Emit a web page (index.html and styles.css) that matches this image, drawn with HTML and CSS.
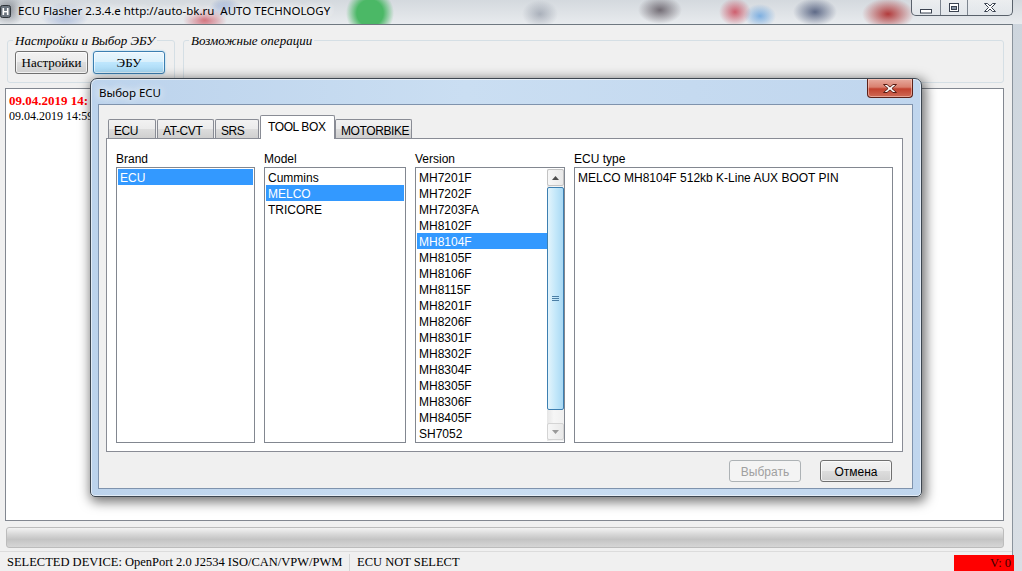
FILE: index.html
```html
<!DOCTYPE html>
<html lang="ru">
<head>
    <meta charset="UTF-8">
    <title>ECU Flasher 2.3.4.e</title>
    <link rel="stylesheet" href="styles.css">
</head>
<body>

<div class="window">
    <!-- заголовок главного окна -->
    <div class="titlebar">
        <svg class="app-icon" width="11" height="15" viewBox="0 0 11 15">
            <rect x="0.5" y="1.5" width="10" height="12" rx="2" fill="#6d7680" stroke="#2e343a"/>
            <rect x="2.5" y="4" width="1.6" height="7" fill="#fff"/>
            <rect x="6.9" y="4" width="1.6" height="7" fill="#fff"/>
            <rect x="3.5" y="7" width="4" height="1.4" fill="#fff"/>
        </svg>
        <span class="title">ECU Flasher 2.3.4.e http://auto-bk.ru  AUTO TECHNOLOGY</span>
        <div class="win-controls">
            <span class="wc wc-min">
                <svg width="14" height="6" viewBox="0 0 14 6"><rect x="1.5" y="1.5" width="11" height="3.5" fill="#fff" stroke="#3b4350"/></svg>
            </span>
            <span class="wc wc-max">
                <svg width="12" height="11" viewBox="0 0 12 11"><rect x="1.5" y="1.5" width="9" height="8" fill="#fff" stroke="#3b4350"/><rect x="3.5" y="4.5" width="5" height="3" fill="#8a96a6" stroke="#3b4350"/></svg>
            </span>
            <span class="wc wc-close">
                <svg width="14" height="11" viewBox="0 0 14 11"><path d="M1.5 1.5h3l2.5 2.5 2.5-2.5h3l-4 4 4 4h-3l-2.5-2.5-2.5 2.5h-3l4-4z" fill="#fff" stroke="#3b4350"/></svg>
            </span>
        </div>
    </div>

    <div class="client">
        <div class="top-row">
            <fieldset class="group group-settings">
                <legend>Настройки и Выбор ЭБУ</legend>
                <button class="btn btn-main">Настройки</button>
                <button class="btn btn-main btn-focus">ЭБУ</button>
            </fieldset>
            <fieldset class="group group-ops">
                <legend>Возможные операции</legend>
            </fieldset>
        </div>

        <!-- журнал (остальное закрыто диалогом) -->
        <div class="log">
            <p class="log-red">09.04.2019 14:</p>
            <p>09.04.2019 14:59</p>
        </div>

        <div class="progress"></div>

        <div class="statusbar">
            <span class="sb-panel sb-device">SELECTED DEVICE: OpenPort 2.0 J2534 ISO/CAN/VPW/PWM</span>
            <span class="sb-panel sb-ecu">ECU NOT SELECT</span>
            <span class="sb-version">V: 0</span>
        </div>
    </div>
</div>

<!-- окно выбора ЭБУ -->
<div class="dialog">
    <div class="dlg-titlebar">
        <span class="dlg-title">Выбор ECU</span>
        <span class="dlg-close">
            <svg width="16" height="11" viewBox="0 0 16 11"><path d="M1.5 1.5h3.5l3 2.6 3-2.6h3.5l-4.6 4 4.6 4h-3.5l-3-2.6-3 2.6h-3.5l4.6-4z" fill="#fff" stroke="#5a1d14"/></svg>
        </span>
    </div>

    <div class="dlg-body">
        <div class="tabs">
            <span class="tab tab-ecu">ECU</span>
            <span class="tab tab-at">AT-CVT</span>
            <span class="tab tab-srs">SRS</span>
            <span class="tab tab-tool active">TOOL BOX</span>
            <span class="tab tab-moto">MOTORBIKE</span>
        </div>

        <div class="tab-panel">
            <div class="pick-grid">
                <div class="col-label">Brand</div>
                <div class="col-label">Model</div>
                <div class="col-label">Version</div>
                <div class="col-label">ECU type</div>

                <div class="listbox">
                    <div class="item selected">ECU</div>
                </div>

                <div class="listbox">
                    <div class="item">Cummins</div>
                    <div class="item selected">MELCO</div>
                    <div class="item">TRICORE</div>
                </div>

                <div class="listbox listbox-scroll">
                    <div class="items">
                        <div class="item">MH7201F</div>
                        <div class="item">MH7202F</div>
                        <div class="item">MH7203FA</div>
                        <div class="item">MH8102F</div>
                        <div class="item selected">MH8104F</div>
                        <div class="item">MH8105F</div>
                        <div class="item">MH8106F</div>
                        <div class="item">MH8115F</div>
                        <div class="item">MH8201F</div>
                        <div class="item">MH8206F</div>
                        <div class="item">MH8301F</div>
                        <div class="item">MH8302F</div>
                        <div class="item">MH8304F</div>
                        <div class="item">MH8305F</div>
                        <div class="item">MH8306F</div>
                        <div class="item">MH8405F</div>
                        <div class="item">SH7052</div>
                    </div>
                    <div class="vscroll">
                        <span class="sc-arrow">
                            <svg width="7" height="4" viewBox="0 0 7 4"><path d="M0 4L3.5 0 7 4z" fill="#4d4d4d"/></svg>
                        </span>
                        <span class="sc-thumb">
                            <svg width="7" height="7" viewBox="0 0 7 7"><path d="M0 1.5h7M0 3.5h7M0 5.5h7" stroke="#4b7fa6" stroke-width="1"/></svg>
                        </span>
                        <span class="sc-arrow sc-down">
                            <svg width="7" height="4" viewBox="0 0 7 4"><path d="M0 0L3.5 4 7 0z" fill="#9a9a9a"/></svg>
                        </span>
                    </div>
                </div>

                <div class="listbox">
                    <div class="item">MELCO MH8104F 512kb K-Line AUX BOOT PIN</div>
                </div>
            </div>
        </div>

        <div class="dlg-buttons">
            <button class="btn btn-disabled">Выбрать</button>
            <button class="btn">Отмена</button>
        </div>
    </div>
</div>

</body>
</html>
```

FILE: styles.css
```css
* {
    box-sizing: border-box;
}
html, body {
    margin: 0;
    padding: 0;
}
body {
    width: 1022px;
    height: 571px;
    overflow: hidden;
    position: relative;
    font-family: "Liberation Sans", Arial, sans-serif;
    font-size: 12px;
    color: #000;
    background: linear-gradient(to bottom, #cdd5dd, #d9dfe5);
}

/* главное окно */
.window {
    display: flex;
    flex-direction: column;
    height: 571px;
}
.titlebar {
    height: 25px;
    display: flex;
    align-items: flex-start;
    background:
        radial-gradient(circle 24px at 370px 13px, #4bb866 55%, rgba(75, 184, 102, 0) 100%),
        radial-gradient(ellipse 22px 12px at 205px 20px, rgba(205, 70, 85, 0.75), rgba(205, 70, 85, 0)),
        radial-gradient(ellipse 16px 10px at 225px 8px, rgba(80, 120, 200, 0.5), rgba(80, 120, 200, 0)),
        radial-gradient(ellipse 24px 14px at 65px 16px, rgba(110, 140, 200, 0.55), rgba(110, 140, 200, 0)),
        radial-gradient(ellipse 18px 16px at 8px 10px, rgba(80, 85, 95, 0.6), rgba(80, 85, 95, 0)),
        radial-gradient(ellipse 18px 14px at 540px 14px, rgba(90, 100, 120, 0.4), rgba(90, 100, 120, 0)),
        radial-gradient(ellipse 22px 14px at 660px 10px, rgba(70, 60, 70, 0.7), rgba(70, 60, 70, 0)),
        radial-gradient(ellipse 16px 14px at 735px 12px, rgba(200, 40, 60, 0.7), rgba(200, 40, 60, 0)),
        radial-gradient(ellipse 16px 12px at 760px 16px, rgba(60, 140, 220, 0.6), rgba(60, 140, 220, 0)),
        radial-gradient(ellipse 22px 14px at 815px 12px, rgba(40, 55, 95, 0.7), rgba(40, 55, 95, 0)),
        radial-gradient(ellipse 26px 16px at 888px 14px, rgba(170, 30, 30, 0.85), rgba(170, 30, 30, 0)),
        linear-gradient(to bottom, #d4d9de, #e8ebee);
}
.app-icon {
    margin-top: 4px;
}
.title {
    font-family: "Noto Sans", "Open Sans", sans-serif;
    font-size: 11.5px;
    line-height: 17px;
    white-space: pre;
    margin: 2px 0 0 7px;
    text-shadow: 0 0 6px #fff, 0 0 10px #fff, 0 0 10px #fff;
}
.win-controls {
    margin-left: auto;
    margin-right: 9px;
    display: flex;
    height: 16px;
    border: 1px solid #59616b;
    border-top: none;
    border-radius: 0 0 5px 5px;
    background: linear-gradient(to bottom, rgba(255, 255, 255, 0.55), rgba(230, 235, 240, 0.35));
    overflow: hidden;
}
.wc {
    display: flex;
    align-items: center;
    justify-content: center;
    height: 15px;
}
.wc-min {
    width: 28px;
    padding-top: 6px;
}
.wc-max {
    width: 27px;
    border-left: 1px solid #7d858f;
}
.wc-close {
    width: 45px;
    border-left: 1px solid #7d858f;
}

.client {
    flex: 1;
    margin-right: 9px;
    background-color: #f0f0f0;
    border-top: 1px solid #6f7880;
    border-right: 1px solid #8a939c;
    display: flex;
    flex-direction: column;
    padding: 0 8px 0 5px;
}
.top-row {
    display: flex;
    gap: 8px;
    margin: 8px 0 0 2px;
}
.group {
    margin: 0;
    padding: 3px 7px 8px;
    border: 1px solid #d5dfe5;
    border-radius: 3px;
    height: 50px;
}
.group legend {
    padding: 0 2px;
    margin-left: -2px;
    font-family: "Liberation Serif", "Times New Roman", serif;
    font-style: italic;
    font-size: 13px;
    line-height: 15px;
}
.group-settings {
    width: 168px;
    display: flex;
    gap: 5px;
}
.group-ops {
    flex: 1;
}

.btn {
    height: 22px;
    width: 72px;
    padding: 0;
    font-family: "Liberation Sans", Arial, sans-serif;
    font-size: 12px;
    color: #000;
    border: 1px solid #707070;
    border-radius: 3px;
    background: linear-gradient(to bottom, #f2f2f2 0%, #ebebeb 49%, #dddddd 50%, #cfcfcf 100%);
    box-shadow: inset 0 0 0 1px rgba(255, 255, 255, 0.7);
}
.btn-main {
    height: 23px;
    width: 73px;
    font-family: "Liberation Serif", "Times New Roman", serif;
    font-size: 13px;
}
.btn-focus {
    width: 72px;
    border-color: #3c7fb1;
    background: linear-gradient(to bottom, #eaf6fd 0%, #d9f0fc 49%, #bee6fd 50%, #a7d9f5 100%);
    box-shadow: inset 0 0 0 1px rgba(255, 255, 255, 0.6), 0 0 2px #8fd0f5;
}
.btn-disabled {
    color: #a0a0a0;
    border-color: #adb2b5;
    background: #f4f4f4;
    box-shadow: none;
}

.log {
    margin-top: 5px;
    height: 433px;
    background-color: #fff;
    border: 1px solid #828790;
    padding: 4px 3px;
    font-family: "Liberation Serif", "Times New Roman", serif;
    font-size: 12px;
    line-height: 15px;
}
.log p {
    margin: 0;
    white-space: nowrap;
}
.log .log-red {
    color: #ff0000;
    font-weight: bold;
    font-size: 13px;
    line-height: 16px;
}

.progress {
    margin: 6px 0 0 1px;
    height: 21px;
    border: 1px solid #bcbcbc;
    border-radius: 3px;
    background: linear-gradient(to bottom, #f3f3f3 0%, #dadada 30%, #c4c4c4 60%, #d6d6d6 100%);
}

.statusbar {
    margin: 3px -8px 0 -5px;
    height: 20px;
    display: flex;
    align-items: flex-end;
    border-top: 1px solid #dcdcdc;
    font-family: "Liberation Serif", "Times New Roman", serif;
    font-size: 12.5px;
    line-height: 16px;
    white-space: nowrap;
}
.sb-panel {
    padding: 0 0 1px 7px;
}
.sb-device {
    width: 350px;
    border-right: 1px solid #d5d5d5;
}
.sb-ecu {
    padding-left: 7px;
}
.sb-version {
    margin-left: auto;
    margin-right: -2px;
    width: 60px;
    height: 16px;
    background-color: #ff0000;
    color: #3a0000;
    text-align: right;
    padding-right: 3px;
}

/* диалог выбора */
.dialog {
    position: absolute;
    left: 90px;
    top: 78px;
    width: 832px;
    height: 419px;
    display: flex;
    flex-direction: column;
    padding: 0 8px 7px 7px;
    border: 1px solid #3d4650;
    border-radius: 7px 7px 5px 5px;
    background: linear-gradient(to right, #bcd3ec 0%, #cadef2 45%, #c0d6ee 100%);
    box-shadow: inset 0 0 0 1px rgba(255, 255, 255, 0.55), 2px 3px 12px 2px rgba(0, 0, 0, 0.55);
}
.dlg-titlebar {
    height: 25px;
    display: flex;
    align-items: flex-start;
}
.dlg-title {
    font-family: "Noto Sans", "Open Sans", sans-serif;
    font-size: 11.5px;
    line-height: 17px;
    margin: 5px 0 0 1px;
    text-shadow: 0 0 8px #fff, 0 0 8px #fff;
}
.dlg-close {
    margin-left: auto;
    width: 46px;
    height: 19px;
    display: flex;
    align-items: center;
    justify-content: center;
    border: 1px solid #5b2119;
    border-top: none;
    border-radius: 0 0 4px 4px;
    background: linear-gradient(to bottom, #e7aa9e 0%, #d9806f 45%, #c2422f 55%, #cf6a55 100%);
    box-shadow: inset 0 0 0 1px rgba(255, 220, 210, 0.5);
}

.dlg-body {
    flex: 1;
    background-color: #f0f0f0;
    border: 1px solid #7f93ad;
    padding: 10px 0 0 7px;
}

.tabs {
    display: flex;
    height: 24px;
    margin-left: 2px;
    position: relative;
    z-index: 1;
}
.tab {
    height: 19px;
    margin: 4px 1px 0 0;
    padding: 4px 0 0 5px;
    line-height: 15px;
    letter-spacing: -0.4px;
    border: 1px solid #898c95;
    border-bottom: none;
    border-radius: 2px 2px 0 0;
    background: linear-gradient(to bottom, #f2f2f2 0%, #ebebeb 49%, #dddddd 50%, #cfcfcf 100%);
    white-space: nowrap;
}
.tab.active {
    height: 24px;
    margin-top: 0;
    padding-top: 4px;
    padding-left: 7px;
    background: #fff;
}
.tab-ecu { width: 48px; }
.tab-at { width: 57px; }
.tab-srs { width: 44px; }
.tab-tool { width: 75px; margin-right: 0; }
.tab-moto { width: 77px; }

.tab-panel {
    width: 797px;
    height: 314px;
    margin-top: -1px;
    background-color: #fff;
    border: 1px solid #898c95;
    padding: 12px 9px 0;
}
.pick-grid {
    display: grid;
    grid-template-columns: 139px 142px 150px 319px;
    grid-template-rows: 14px 276px;
    column-gap: 9px;
    row-gap: 2px;
}
.col-label {
    height: 14px;
    line-height: 16px;
}

.listbox {
    border: 1px solid #828790;
    background-color: #fff;
    padding: 1px;
}
.item {
    height: 16px;
    line-height: 18px;
    padding-left: 2px;
    white-space: nowrap;
}
.item.selected {
    background-color: #3399ff;
    color: #fff;
}
.listbox-scroll {
    display: flex;
    padding-right: 0;
}
.listbox-scroll .items {
    flex: 1;
}
.vscroll {
    width: 17px;
    display: flex;
    flex-direction: column;
    background: linear-gradient(to right, #e6e6e6, #f6f6f6 40%, #f0f0f0);
}
.sc-arrow {
    height: 17px;
    display: flex;
    align-items: center;
    justify-content: center;
    border: 1px solid #c3c3c3;
    border-radius: 2px;
    background: linear-gradient(to right, #f7f7f7, #e9e9e9);
}
.sc-down {
    margin-top: auto;
    margin-bottom: 1px;
    border-color: #d4d4d4;
}
.sc-thumb {
    height: 223px;
    margin-top: 1px;
    display: flex;
    align-items: center;
    justify-content: center;
    border: 1px solid #3c7fb1;
    border-radius: 2px;
    background: linear-gradient(to right, #e3f4fc 0%, #c4e8fa 50%, #a9d9f4 100%);
}

.dlg-buttons {
    width: 797px;
    display: flex;
    justify-content: flex-end;
    gap: 19px;
    margin-top: 8px;
    padding-right: 11px;
}
.dlg-buttons .btn {
    line-height: 20px;
    padding-top: 1px;
}
```
